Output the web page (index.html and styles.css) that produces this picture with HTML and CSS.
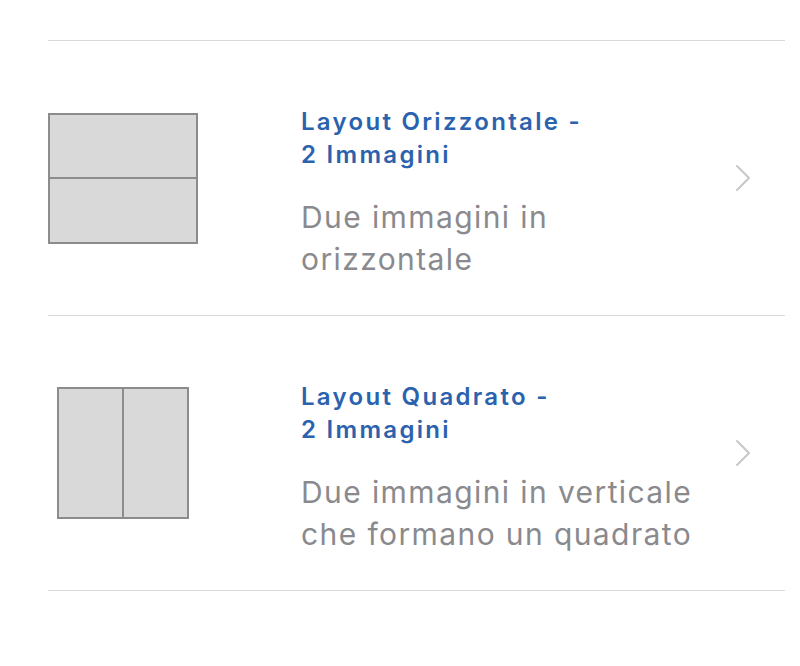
FILE: index.html
```html
<!DOCTYPE html>
<html lang="it">
<head>
<meta charset="utf-8">
<link rel="stylesheet" href="styles.css">
</head>
<body>
<div class="list">
  <div class="row">
    <div class="thumb">
      <div class="layout layout-h">
        <div class="cell"></div>
        <div class="cell"></div>
      </div>
    </div>
    <div class="text">
      <div class="title">Layout Orizzontale -<br>2 Immagini</div>
      <div class="desc">Due immagini in orizzontale</div>
    </div>
    <svg class="chevron" width="16" height="28" viewBox="0 0 16 28"><path d="M2 2 L14 14 L2 26" fill="none" stroke="#c7c7cc" stroke-width="2" stroke-linecap="round" stroke-linejoin="round"/></svg>
  </div>
  <div class="row">
    <div class="thumb">
      <div class="layout layout-v">
        <div class="cell"></div>
        <div class="cell"></div>
      </div>
    </div>
    <div class="text">
      <div class="title">Layout Quadrato -<br>2 Immagini</div>
      <div class="desc">Due immagini in verticale che formano un quadrato</div>
    </div>
    <svg class="chevron" width="16" height="28" viewBox="0 0 16 28"><path d="M2 2 L14 14 L2 26" fill="none" stroke="#c7c7cc" stroke-width="2" stroke-linecap="round" stroke-linejoin="round"/></svg>
  </div>
</div>
</body>
</html>
```
FILE: styles.css
```css
html, body {
  margin: 0;
  padding: 0;
  background: #ffffff;
}

body {
  font-family: Inter, "Open Sans", Roboto, sans-serif;
}

.list {
  margin: 40px 15px 0 48px;
  border-top: 1px solid #d9d9d9;
}

.row {
  display: flex;
  align-items: center;
  height: 274px;
  border-bottom: 1px solid #d9d9d9;
}

.thumb {
  width: 150px;
  display: flex;
  justify-content: center;
  flex-shrink: 0;
}

.layout {
  display: flex;
  border: 2px solid #8c8c8c;
  background: #8c8c8c;
  gap: 2px;
  box-sizing: border-box;
}

.layout-h {
  flex-direction: column;
  width: 150px;
  height: 131px;
}

.layout-v {
  flex-direction: row;
  width: 132px;
  height: 132px;
}

.cell {
  flex: 1;
  background: #d9d9d9;
}

.text {
  align-self: flex-start;
  margin-left: 103px;
  padding-top: 64px;
  width: 412px;
}

.title {
  color: #2b62ad;
  font-size: 24px;
  font-weight: 600;
  line-height: 33px;
  letter-spacing: 2.3px;
}

.desc {
  margin-top: 25px;
  color: #8a8a8e;
  font-size: 30px;
  line-height: 42px;
  letter-spacing: 1.4px;
}

.chevron {
  margin-left: 22px;
  flex-shrink: 0;
}
```
